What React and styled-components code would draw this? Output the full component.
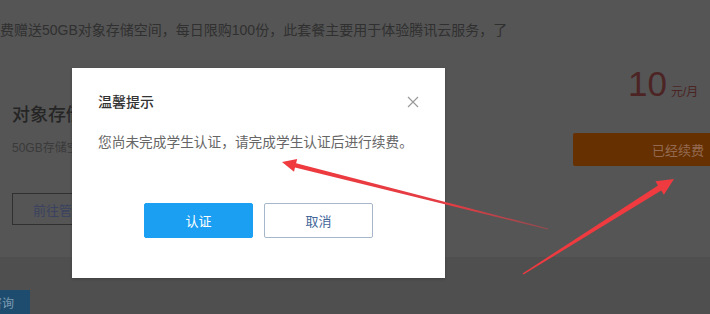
import styled, { createGlobalStyle } from 'styled-components';

const GlobalStyle = createGlobalStyle`
  html, body {
    margin: 0;
    padding: 0;
    background: #4f4f4f;
  }
  body {
    font-family: "Liberation Sans", "Noto Sans CJK SC", sans-serif;
  }
`;

const Page = styled.div`
  position: relative;
  width: 710px;
  height: 314px;
  overflow: hidden;
  background: #4f4f4f;
`;

// dimmed page behind the dialog
const Panel = styled.section`
  width: 800px;
  height: 257px;
  box-sizing: border-box;
  padding: 20px 17px 0 12px;
  background: #555555;
`;

const Intro = styled.p`
  margin: 0 0 0 -26px;
  font-size: 14px;
  line-height: 20px;
  color: #303030;
  white-space: nowrap;
`;

const ProductRow = styled.div`
  display: flex;
  justify-content: space-between;
  margin-top: 24px;
`;

const ProductInfo = styled.div`
  display: flex;
  flex-direction: column;
  align-items: flex-start;
  padding-top: 38px;
`;

const ProductTitle = styled.h2`
  margin: 0;
  font-size: 18px;
  line-height: 26px;
  font-weight: 500;
  color: #252525;
`;

const ProductDesc = styled.div`
  margin-top: 11px;
  font-size: 12px;
  line-height: 18px;
  color: #3a3a3a;
`;

const OutlineButton = styled.button`
  margin-top: 36px;
  width: 116px;
  height: 32px;
  border: 1px solid #303030;
  background: transparent;
  color: #3a4260;
  font-family: inherit;
  font-size: 13px;
  text-align: left;
  padding-left: 20px;
`;

const PriceBox = styled.div`
  display: flex;
  flex-direction: column;
  width: 210px;
`;

const Price = styled.div`
  padding-left: 55px;
  line-height: 40px;
  color: #4c2424;
  white-space: nowrap;
`;

const PriceNum = styled.span`
  font-size: 35px;
`;

const PriceUnit = styled.span`
  margin-left: 4px;
  font-size: 12px;
`;

const RenewButton = styled.button`
  margin-top: 21px;
  height: 33px;
  border: none;
  border-radius: 2px;
  background: #663000;
  color: #946a52;
  font-family: inherit;
  font-size: 13px;
`;

const Footer = styled.div`
  padding-top: 33px;
`;

const ConsultButton = styled.button`
  margin-left: -50px;
  width: 80px;
  height: 24px;
  border: none;
  background: #1d4c6e;
  color: #7d9bb2;
  font-family: inherit;
  font-size: 12px;
`;

// dialog on top of the dimmed page
const Dialog = styled.div`
  position: absolute;
  left: 72px;
  top: 68px;
  width: 373px;
  height: 210px;
  box-sizing: border-box;
  padding: 24px 26px 0 26px;
  background: #fff;
  box-shadow: 0 1px 3px rgba(0, 0, 0, 0.2);
`;

const DialogHeader = styled.div`
  display: flex;
  justify-content: space-between;
  align-items: center;
`;

const DialogTitle = styled.h3`
  margin: 0;
  font-size: 14px;
  line-height: 20px;
  font-weight: 500;
  color: #333;
`;

const CloseIcon = styled.svg`
  width: 12px;
  height: 12px;
`;

const DialogBody = styled.p`
  margin: 21px 0 0 0;
  font-size: 13.7px;
  line-height: 20px;
  color: #666;
  white-space: nowrap;
`;

const DialogActions = styled.div`
  display: flex;
  justify-content: center;
  gap: 11px;
  margin-top: 50px;
`;

const DialogButton = styled.button`
  width: 109px;
  height: 35px;
  border-radius: 2px;
  font-family: inherit;
  font-size: 13px;
  border: 1px solid ${(p) => (p.$primary ? '#1a9ff3' : '#a7b7cb')};
  background: ${(p) => (p.$primary ? '#1a9ff3' : '#fff')};
  color: ${(p) => (p.$primary ? '#fff' : '#44679a')};
`;

const Annotations = styled.svg`
  position: absolute;
  left: 0;
  top: 0;
  width: 710px;
  height: 314px;
  pointer-events: none;
`;

function arrowPoints(x1, y1, x2, y2, w1, w2, headLen, headW) {
  const dx = x2 - x1;
  const dy = y2 - y1;
  const len = Math.hypot(dx, dy);
  const ux = dx / len;
  const uy = dy / len;
  const nx = -uy;
  const ny = ux;
  const bx = x2 - ux * headLen;
  const by = y2 - uy * headLen;
  const pts = [
    [x1 + (nx * w1) / 2, y1 + (ny * w1) / 2],
    [bx + (nx * w2) / 2, by + (ny * w2) / 2],
    [bx + (nx * headW) / 2, by + (ny * headW) / 2],
    [x2, y2],
    [bx - (nx * headW) / 2, by - (ny * headW) / 2],
    [bx - (nx * w2) / 2, by - (ny * w2) / 2],
    [x1 - (nx * w1) / 2, y1 - (ny * w1) / 2],
  ];
  return pts.map((p) => p.map((v) => v.toFixed(1)).join(',')).join(' ');
}

export default function App() {
  return (
    <>
      <GlobalStyle />
      <Page>
        <Panel>
          <Intro>免费赠送50GB对象存储空间，每日限购100份，此套餐主要用于体验腾讯云服务，了</Intro>
          <ProductRow>
            <ProductInfo>
              <ProductTitle>对象存储套餐</ProductTitle>
              <ProductDesc>50GB存储空间</ProductDesc>
              <OutlineButton>前往管理</OutlineButton>
            </ProductInfo>
            <PriceBox>
              <Price>
                <PriceNum>10</PriceNum>
                <PriceUnit>元/月</PriceUnit>
              </Price>
              <RenewButton>已经续费</RenewButton>
            </PriceBox>
          </ProductRow>
        </Panel>
        <Footer>
          <ConsultButton>立即咨询</ConsultButton>
        </Footer>

        <Dialog>
          <DialogHeader>
            <DialogTitle>温馨提示</DialogTitle>
            <CloseIcon viewBox="0 0 12 12">
              <path d="M1 1 L11 11 M11 1 L1 11" stroke="#9a9a9a" strokeWidth="1.2" fill="none" />
            </CloseIcon>
          </DialogHeader>
          <DialogBody>您尚未完成学生认证，请完成学生认证后进行续费。</DialogBody>
          <DialogActions>
            <DialogButton $primary>认证</DialogButton>
            <DialogButton>取消</DialogButton>
          </DialogActions>
        </Dialog>

        <Annotations viewBox="0 0 710 314">
          <defs>
            <linearGradient id="fade1" x1="548" y1="229" x2="282" y2="162" gradientUnits="userSpaceOnUse">
              <stop offset="0" stopColor="#c8414a" stopOpacity="0.55" />
              <stop offset="0.35" stopColor="#e23c44" />
              <stop offset="1" stopColor="#f03a3e" />
            </linearGradient>
          </defs>
          <polygon points={arrowPoints(548, 229, 282, 162, 1, 4.5, 14, 13)} fill="url(#fade1)" />
          <polygon points={arrowPoints(523, 274, 674, 179, 1.5, 6, 17, 16)} fill="#ef3b40" />
        </Annotations>
      </Page>
    </>
  );
}
